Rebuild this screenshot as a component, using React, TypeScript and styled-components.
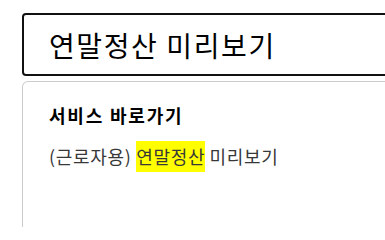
import React from "react";
import styled, { createGlobalStyle } from "styled-components";

const GlobalStyle = createGlobalStyle`
	html, body {
		margin: 0;
		padding: 0;
		background: #ffffff;
		overflow: hidden;
	}
	body {
		font-family: "Noto Sans CJK KR", "Noto Sans", sans-serif;
	}
`;

const Page = styled.div`
	display: flex;
	flex-direction: column;
	gap: 5px;
	padding: 13px 0 0 22px;
	width: 480px;
	height: 227px;
	box-sizing: border-box;
`;

const SearchInput = styled.input`
	box-sizing: border-box;
	flex: none;
	height: 63px;
	width: 100%;
	padding: 0 25px;
	border: 2px solid #111111;
	border-radius: 4px;
	font-family: "Noto Sans CJK KR", sans-serif;
	font-size: 28px;
	letter-spacing: 1.6px;
	color: #000000;
	background: #ffffff;
	outline: none;
`;

const Card = styled.section`
	box-sizing: border-box;
	flex: 1;
	border: 1px solid #cccccc;
	border-bottom: none;
	border-radius: 6px 6px 0 0;
	padding: 20px 26px;
`;

const CardTitle = styled.h3`
	margin: 0 0 14px;
	font-size: 18px;
	font-weight: 700;
	letter-spacing: 1.8px;
	color: #000000;
	line-height: 26px;
`;

const ResultLink = styled.a`
	display: block;
	font-size: 18px;
	letter-spacing: 0.7px;
	color: #383838;
	line-height: 28px;
	text-decoration: none;
`;

const Highlight = styled.mark`
	background: #ffff00;
	color: inherit;
	padding: 2px 0 3px;
	margin: 0 -0.7px 0 0;
`;

export default function App() {
	return (
		<>
			<GlobalStyle />
			<Page>
				<SearchInput defaultValue="연말정산 미리보기" />
				<Card>
					<CardTitle>서비스 바로가기</CardTitle>
					<ResultLink href="#">
						(근로자용) <Highlight>연말정산</Highlight> 미리보기
					</ResultLink>
				</Card>
			</Page>
		</>
	);
}
